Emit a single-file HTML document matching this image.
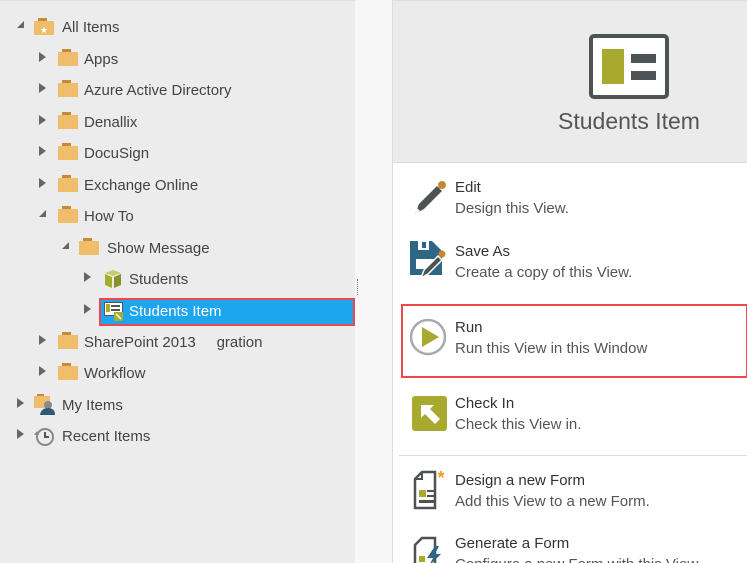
<!DOCTYPE html>
<html><head><meta charset="utf-8"><style>
*{margin:0;padding:0;box-sizing:border-box}
html,body{width:747px;height:563px;overflow:hidden}
body{position:relative;font-family:"Liberation Sans",sans-serif;background:#f7f7f7}
.left{position:absolute;left:0;top:0;width:355px;height:563px;background:#ececec;border-top:1px solid #e0e0e0}
.row{position:absolute;height:20px;font-size:15px;color:#444;line-height:20px;white-space:nowrap}
.arr{position:absolute;width:0;height:0;border-top:5px solid transparent;border-bottom:5px solid transparent;border-left:7px solid #666}
.arrd{position:absolute;width:0;height:0;border-left:7px solid transparent;border-bottom:7px solid #666}
.fold{position:absolute;width:20px;height:17px}
.right{position:absolute;left:392px;top:0;width:355px;height:563px;background:#fff;border-left:1px solid #ddd}
.hdr{position:absolute;left:0;top:0;width:355px;height:163px;background:#ebebeb;border-bottom:1px solid #ddd;border-top:1px solid #ddd}
.it{position:absolute;left:62px;font-size:15px;color:#333;white-space:nowrap}
.it .d{color:#555;margin-top:4px}
.sep{position:absolute;left:6px;width:349px;height:1px;background:#ddd}
</style></head><body>
<div class="left">
<svg width="0" height="0" style="position:absolute"><defs>
<g id="f"><rect x="4" y="0" width="9" height="3" fill="#c68a3a"/><rect x="0" y="3" width="20" height="14" fill="#f0bd6c"/></g></defs></svg>

<div class="arrd" style="left:17px;top:20px"></div>
<svg class="fold" style="left:34px;top:17px" width="20" height="19"><rect x="4" y="0" width="9" height="3" fill="#c68a3a"/><rect x="0" y="3" width="20" height="15" fill="#f0bd6c"/><text x="10" y="15" font-size="9" fill="#fff" text-anchor="middle">★</text></svg>
<div class="row" style="left:62px;top:17px">All Items</div>

<div class="arr" style="left:39px;top:51px"></div><svg class="fold" style="left:58px;top:48px"><use href="#f"/></svg><div class="row" style="left:84px;top:49px">Apps</div>
<div class="arr" style="left:39px;top:82px"></div><svg class="fold" style="left:58px;top:79px"><use href="#f"/></svg><div class="row" style="left:84px;top:80px">Azure Active Directory</div>
<div class="arr" style="left:39px;top:114px"></div><svg class="fold" style="left:58px;top:111px"><use href="#f"/></svg><div class="row" style="left:84px;top:112px">Denallix</div>
<div class="arr" style="left:39px;top:145px"></div><svg class="fold" style="left:58px;top:142px"><use href="#f"/></svg><div class="row" style="left:84px;top:143px">DocuSign</div>
<div class="arr" style="left:39px;top:177px"></div><svg class="fold" style="left:58px;top:174px"><use href="#f"/></svg><div class="row" style="left:84px;top:175px">Exchange Online</div>
<div class="arrd" style="left:39px;top:209px"></div><svg class="fold" style="left:58px;top:205px"><use href="#f"/></svg><div class="row" style="left:84px;top:206px">How To</div>
<div class="arrd" style="left:62px;top:241px"></div><svg class="fold" style="left:79px;top:237px"><use href="#f"/></svg><div class="row" style="left:107px;top:238px">Show Message</div>
<div class="arr" style="left:84px;top:271px"></div>
<svg style="position:absolute;left:104px;top:269px" width="18" height="18"><path d="M1 3 L9 0 L17 3 L9 6Z" fill="#c5cc6a"/><path d="M1 4 L8 7 L8 18 L1 15Z" fill="#a5ad2e"/><path d="M10 7 L17 4 L17 15 L10 18Z" fill="#8a9127"/></svg>
<div class="row" style="left:129px;top:269px">Students</div>
<div class="arr" style="left:84px;top:303px"></div>
<div style="position:absolute;left:99px;top:297px;width:256px;height:28px;border:2px solid #f0474a;background:#1ea5ef"></div>
<svg style="position:absolute;left:104px;top:301px" width="20" height="19"><rect x="0.5" y="0.5" width="18" height="13" fill="#fff" stroke="#555"/><rect x="2" y="2" width="4" height="8" fill="#a5ad2e"/><rect x="7" y="3" width="9" height="2" fill="#555"/><rect x="7" y="7" width="9" height="2" fill="#555"/><rect x="10" y="10" width="9" height="9" fill="#a5ad2e"/><path d="M12 12 L17 17" stroke="#fff" stroke-width="1.5"/></svg>
<div class="row" style="left:129px;top:301px;color:#fff">Students Item</div>
<div class="arr" style="left:39px;top:334px"></div><svg class="fold" style="left:58px;top:331px"><use href="#f"/></svg><div class="row" style="left:84px;top:332px">SharePoint 2013 &nbsp;&nbsp;&nbsp; gration</div>
<div class="arr" style="left:39px;top:365px"></div><svg class="fold" style="left:58px;top:362px"><use href="#f"/></svg><div class="row" style="left:84px;top:363px">Workflow</div>
<div class="arr" style="left:17px;top:397px"></div>
<svg style="position:absolute;left:34px;top:393px" width="22" height="22"><rect x="3" y="0" width="7" height="2" fill="#c68a3a"/><rect x="0" y="2" width="16" height="12" fill="#f0bd6c"/><circle cx="14" cy="11" r="4" fill="#888"/><path d="M6 21 Q7 14 14 14 Q21 14 21 21Z" fill="#2d5a7b"/></svg>
<div class="row" style="left:62px;top:395px">My Items</div>
<div class="arr" style="left:17px;top:428px"></div>
<svg style="position:absolute;left:34px;top:425px" width="22" height="22"><circle cx="11" cy="11" r="8" fill="none" stroke="#888" stroke-width="2"/><path d="M11 6 V11 H15" stroke="#555" stroke-width="2" fill="none"/><path d="M0 9 L5 9 L3 5Z" fill="#888"/></svg>
<div class="row" style="left:62px;top:426px">Recent Items</div>
</div>
<div style="position:absolute;left:357px;top:279px;width:1px;height:16px;border-left:1px dotted #777"></div>

<div class="right">
<div class="hdr">
<svg style="position:absolute;left:196px;top:33px" width="80" height="66"><rect x="2" y="2" width="76" height="61" rx="3" fill="#fff" stroke="#4d5354" stroke-width="4"/><rect x="13" y="15" width="22" height="35" fill="#a8aa2f"/><rect x="42" y="20" width="25" height="9" fill="#4d5354"/><rect x="42" y="37" width="25" height="9" fill="#4d5354"/></svg>
<div style="position:absolute;left:0;width:472px;top:107px;text-align:center;font-size:23px;color:#555">Students Item</div>
</div>
<svg style="position:absolute;left:17px;top:180px" width="38" height="38"><path d="M5 34 L9 24 L27 6 L32 11 L14 29Z" fill="#4d5354"/><path d="M5 34 L7 28 L10 31Z" fill="#fff"/><circle cx="32" cy="5" r="4" fill="#c9862e"/></svg>
<div class="it" style="top:179px">Edit<div class="d">Design this View.</div></div>
<svg style="position:absolute;left:17px;top:241px" width="38" height="38"><path d="M0 0 H22 L32 10 V34 H0Z" fill="#2e6685"/><rect x="8" y="0" width="11" height="9" fill="#fff"/><rect x="12" y="1" width="4" height="6" fill="#2e6685"/><rect x="6" y="18" width="18" height="10" fill="#fff"/><path d="M11 37 L14 29 L28 15 L32 19 L18 33Z" fill="#4d5354" stroke="#fff" stroke-width="1.5"/><circle cx="32" cy="13" r="3.5" fill="#c9862e"/></svg>
<div class="it" style="top:243px">Save As<div class="d">Create a copy of this View.</div></div>
<div style="position:absolute;left:8px;top:304px;width:347px;height:74px;border:2px solid #f0474a"></div>
<svg style="position:absolute;left:16px;top:318px" width="38" height="38"><circle cx="19" cy="19" r="17" fill="#fff" stroke="#aaa" stroke-width="2.5"/><path d="M13 9 L30 19 L13 29Z" fill="#a8aa2f"/></svg>
<div class="it" style="top:319px">Run<div class="d">Run this View in this Window</div></div>
<svg style="position:absolute;left:19px;top:396px" width="36" height="36"><rect x="0" y="0" width="35" height="35" rx="3" fill="#a8aa2f"/><path d="M9 9 H22 L18 13 L28 23 L23 28 L13 18 L9 22Z" fill="#fff"/></svg>
<div class="it" style="top:395px">Check In<div class="d">Check this View in.</div></div>
<div class="sep" style="top:455px"></div>
<svg style="position:absolute;left:20px;top:470px" width="38" height="42"><path d="M9 2 H22 V38 H2 V9Z" fill="#fff" stroke="#4d5354" stroke-width="2.5"/><path d="M2 9 H9 V2" fill="none" stroke="#4d5354" stroke-width="2"/><rect x="6" y="20" width="7" height="7" fill="#a8aa2f"/><rect x="14" y="20" width="8" height="2" fill="#4d5354"/><rect x="14" y="25" width="8" height="2" fill="#4d5354"/><rect x="6" y="30" width="16" height="3" fill="#4d5354"/><text x="28" y="14" font-size="18" fill="#f59a23" text-anchor="middle" font-weight="bold">*</text></svg>
<div class="it" style="top:472px">Design a new Form<div class="d">Add this View to a new Form.</div></div>
<svg style="position:absolute;left:20px;top:536px" width="38" height="30"><path d="M9 2 H22 V38 H2 V9Z" fill="#fff" stroke="#4d5354" stroke-width="2.5"/><rect x="6" y="20" width="6" height="6" fill="#a8aa2f"/><path d="M22 10 L14 22 H20 L16 30 L28 18 H22 L26 10Z" fill="#2e6685"/></svg>
<div class="it" style="top:535px">Generate a Form<div class="d">Configure a new Form with this View.</div></div>
</div>
</body></html>
